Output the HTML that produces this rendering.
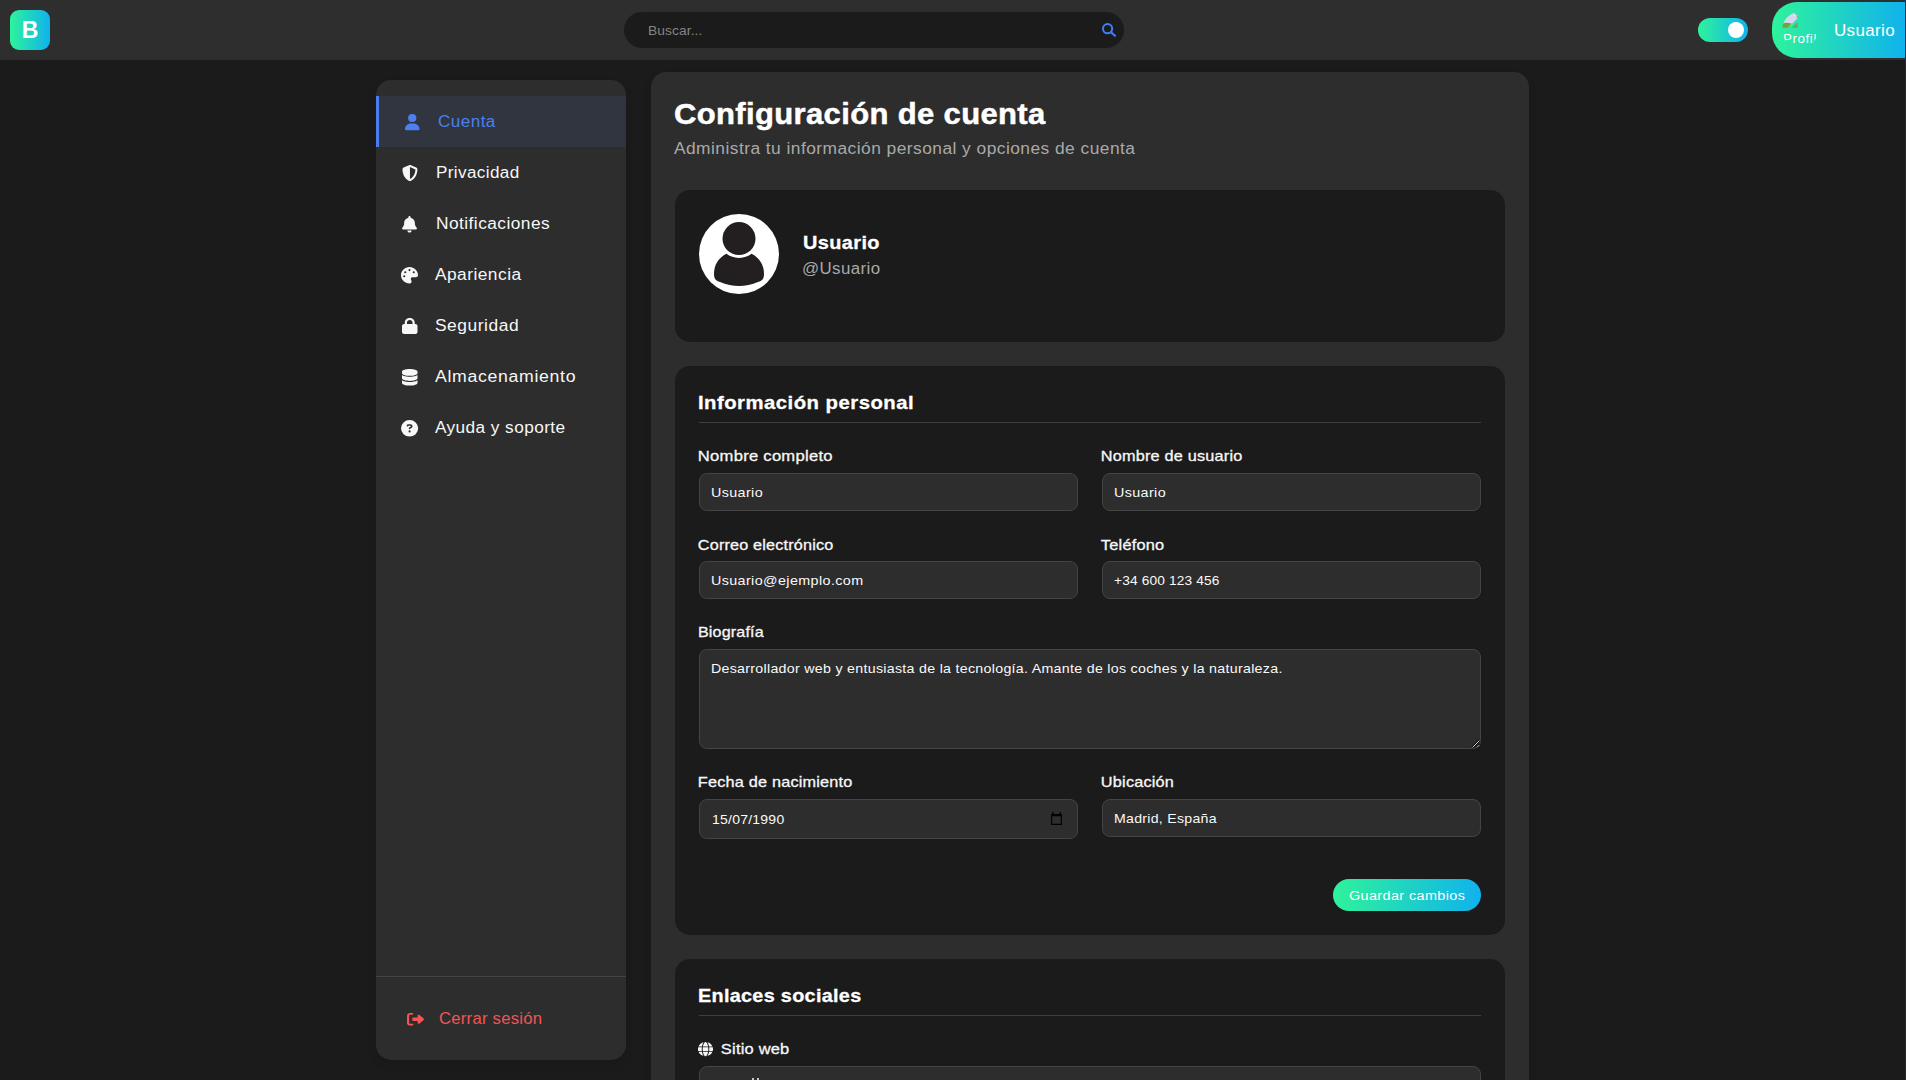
<!DOCTYPE html>
<html lang="es">
<head>
<meta charset="utf-8">
<title>Configuración de cuenta</title>
<style>
*{box-sizing:border-box;margin:0;padding:0}
html,body{width:1906px;height:1080px;overflow:hidden;background:#1b1b1b;font-family:"Liberation Sans",sans-serif;color:#fff}
.abs{position:absolute}
.t{position:absolute;white-space:nowrap;line-height:40px;height:40px}
.ic{position:absolute;overflow:visible}
.grad{background:linear-gradient(90deg,#2ef39b 0%,#10b2ec 100%)}
#hdr{position:absolute;left:0;top:0;width:1906px;height:60px;background:#2e2e2e}
#logo{left:10px;top:10px;width:40px;height:40px;border-radius:9px;color:#fff;font-weight:bold;font-size:23px;text-align:center;line-height:41px}
#search{left:624px;top:12px;width:500px;height:36px;border-radius:18px;background:#1b1b1b}
#toggle{left:1698px;top:18px;width:50px;height:24px;border-radius:12px;background:linear-gradient(90deg,#2ef39b,#10b2ec)}
#knob{left:1728px;top:22px;width:16px;height:16px;border-radius:50%;background:#fff}
#prof{left:1772px;top:2px;width:133px;height:56px;border-radius:25px 0 0 25px}
#side{left:376px;top:80px;width:250px;height:980px;border-radius:15px;box-shadow:0 4px 8px rgba(0,0,0,.12);background:#2d2d2d;overflow:hidden}
#act{left:376px;top:96px;width:250px;height:51px;background:#30353f;border-left:3px solid #4a7dec}
#sdiv{left:376px;top:976px;width:250px;height:1px;background:#444}
#main{left:651px;top:72px;width:878px;height:1100px;border-radius:15px;box-shadow:0 4px 8px rgba(0,0,0,.12);background:#2d2d2d}
.card{position:absolute;left:675px;width:830px;border-radius:15px;background:#1b1b1b}
.hr{position:absolute;left:699px;width:782px;height:1px;background:#3f3f3f}
.inp{position:absolute;height:38px;border:1px solid #444;border-radius:8px;background:#2d2d2d}
#btn{left:1333px;top:879px;width:148px;height:32px;border-radius:16px}

</style>
</head>
<body>
<div id="hdr"></div>
<div id="logo" class="abs grad">B</div>
<div id="search" class="abs"></div>
<svg class="ic" style="left:1100px;top:21px;width:18px;height:18px" viewBox="0 0 18 18"><circle cx="7.6" cy="7.7" r="4.6" fill="none" stroke="#3f7ff5" stroke-width="2"/><path d="M11 11.2 L15 14.8" stroke="#3f7ff5" stroke-width="2.2" stroke-linecap="round"/></svg>
<div id="toggle" class="abs"></div>
<div id="knob" class="abs"></div>
<div id="prof" class="abs grad"></div>
<div class="abs" style="left:1782px;top:12px;width:36px;height:36px;border-radius:50%;overflow:hidden">
<svg style="position:absolute;left:0;top:1px;width:16px;height:16px" viewBox="0 0 16 16">
<path fill="#d4d8ee" d="M0 14.8 L6 14.8 L15.6 5.2 L15.6 3 L12.6 0 L0 0 Z"/>
<path fill="#f4f5fb" d="M12.6 0 L12.6 3 L15.6 3 Z"/>
<path fill="#6aa93a" d="M0 10.8 C3 9.2 6 9.6 9.6 10.6 L6 14.8 L0 14.8 Z"/>
<path fill="#6aa93a" d="M10 14.8 L15.6 9.2 L15.6 14.8 Z"/>
<path fill="none" stroke="#9a8f96" stroke-width="0.9" d="M0 14.4 L6.4 14.4 M10 14.4 L15.2 14.4 L15.2 9.5 M15.2 5 L15.2 3 L12.6 0.4"/>
</svg>
<div style="position:absolute;left:1px;top:19px;font-size:13.33px;line-height:16px;color:#fff;letter-spacing:0.6px;white-space:nowrap">Profile</div>
</div>

<div id="side" class="abs"></div>
<div id="act" class="abs"></div>
<div id="sdiv" class="abs"></div>

<div id="main" class="abs"></div>
<div class="card" style="top:190px;height:152px"></div>
<div class="card" style="top:366px;height:569px"></div>
<div class="card" style="top:959px;height:300px"></div>
<div class="hr" style="top:422px"></div>
<div class="hr" style="top:1015px"></div>

<svg class="ic" style="left:699px;top:214px;width:80px;height:80px" viewBox="0 0 80 80">
<circle cx="40" cy="40" r="40" fill="#fff"/>
<path fill="#231f20" d="M15,60 C15,46 26,37 40,37 C54,37 65,46 65,60 C65,65 63,67 59,68 Q40,76 21,68 C17,67 15,65 15,60 Z"/>
<circle cx="40" cy="24.6" r="19.5" fill="#fff"/>
<circle cx="40" cy="24.6" r="16.5" fill="#231f20"/>
</svg>

<div class="inp" style="left:699px;top:473px;width:379px"></div>
<div class="inp" style="left:1102px;top:473px;width:379px"></div>
<div class="inp" style="left:699px;top:561px;width:379px"></div>
<div class="inp" style="left:1102px;top:561px;width:379px"></div>
<div class="inp" style="left:699px;top:649px;width:782px;height:100px"></div>
<div class="inp" style="left:699px;top:799px;width:379px;height:40px"></div>
<div class="inp" style="left:1102px;top:799px;width:379px;height:38px"></div>
<div class="inp" style="left:699px;top:1066px;width:782px;height:38px"></div>
<div id="btn" class="abs grad"></div>
<svg class="ic" style="left:1050px;top:811px;width:13px;height:15px" viewBox="0 0 13 15">
<path fill="#000" d="M2 1.2 h1.6 v1.8 h5.8 v-1.8 h1.6 v1.8 h0.9 v11 h-10.8 v-11 h0.9 z M2.2 5.2 v7.6 h8.6 v-7.6 z"/>
</svg>
<svg class="ic" style="left:1470px;top:738px;width:11px;height:11px" viewBox="0 0 11 11">
<path d="M2.8 9.2 L9.2 2.8 M7.2 9.2 L9.2 7.2" stroke="#111" stroke-width="2.4" stroke-linecap="round"/>
<path d="M2.8 9.2 L9.2 2.8 M7.2 9.2 L9.2 7.2" stroke="#d8d8d8" stroke-width="1" stroke-linecap="round"/>
</svg>
<div class="abs" style="left:752px;top:1078px;width:2px;height:2px;background:#c8c8c8"></div>
<div class="abs" style="left:757px;top:1078px;width:2px;height:2px;background:#c8c8c8"></div>
<div class="abs" style="left:1905px;top:60px;width:1px;height:1020px;background:#282828"></div>

<svg class="ic" style="left:405.3px;top:113.8px;width:14.5px;height:16.200000000000003px" viewBox="0 0 448 512" preserveAspectRatio="none"><path fill="#4b80ee" d="M224 256A128 128 0 1 0 224 0a128 128 0 1 0 0 256zm-45.7 48C79.8 304 0 383.8 0 482.3C0 498.7 13.3 512 29.7 512H418.3c16.4 0 29.7-13.3 29.7-29.7C448 383.8 368.2 304 269.7 304H178.3z"/></svg>
<svg class="ic" style="left:401.5px;top:164.9px;width:15.899999999999977px;height:16.19999999999999px" viewBox="0 0 512 512" preserveAspectRatio="none"><path fill="#f7f7f7" d="M256 0c4.6 0 9.2 1 13.4 2.9L457.7 82.8c22 9.3 38.4 31 38.3 57.2c-.5 99.2-41.3 280.7-213.6 363.2c-16.7 8-36.1 8-52.8 0C57.3 420.7 16.5 239.2 16 140c-.1-26.2 16.3-47.9 38.3-57.2L242.7 2.9C246.8 1 251.4 0 256 0zm0 66.8V444.8C394 378 431.1 230.1 432 141.4L256 66.8l0 0z"/></svg>
<svg class="ic" style="left:402px;top:215.6px;width:15px;height:16.599999999999994px" viewBox="0 0 448 512" preserveAspectRatio="none"><path fill="#f7f7f7" d="M224 0c-17.7 0-32 14.3-32 32V51.2C119 66 64 130.6 64 208v18.8c0 47-17.3 92.4-48.5 127.6l-7.4 8.3c-8.4 9.4-10.4 22.9-5.3 34.4S19.4 416 32 416H416c12.6 0 24-7.4 29.2-18.9s3.1-25-5.3-34.4l-7.4-8.300C401.3 319.2 384 273.9 384 226.8V208c0-77.4-55-142-128-156.8V32c0-17.7-14.3-32-32-32zm45.3 493.3c12-12 18.7-28.3 18.700-45.3H224 160c0 17 6.7 33.3 18.7 45.3s28.3 18.7 45.3 18.7s33.3-6.7 45.3-18.7z"/></svg>
<svg class="ic" style="left:401px;top:266.8px;width:17px;height:16.5px" viewBox="0 0 512 512" preserveAspectRatio="none"><path fill="#f7f7f7" d="M512 256c0 .9 0 1.8 0 2.7c-.4 36.5-33.6 61.3-70.1 61.3H344c-26.5 0-48 21.5-48 48c0 3.4 .4 6.7 1 9.9c2.1 10.2 6.5 20 10.8 29.9c6.1 13.8 12.1 27.5 12.1 42c0 31.8-21.6 60.7-53.4 62c-3.500 .1-7 .2-10.6 .2C114.6 512 0 397.4 0 256S114.6 0 256 0S512 114.6 512 256zM128 288a32 32 0 1 0 -64 0 32 32 0 1 0 64 0zm0-96a32 32 0 1 0 0-64 32 32 0 1 0 0 64zM288 96a32 32 0 1 0 -64 0 32 32 0 1 0 64 0zm96 96a32 32 0 1 0 0-64 32 32 0 1 0 0 64z"/></svg>
<svg class="ic" style="left:401.7px;top:318px;width:15.5px;height:16px" viewBox="0 0 448 512" preserveAspectRatio="none"><path fill="#f7f7f7" d="M144 144v48H304V144c0-44.2-35.8-80-80-80s-80 35.8-80 80zM80 192V144C80 64.5 144.5 0 224 0s144 64.5 144 144v48h16c35.3 0 64 28.7 64 64V448c0 35.3-28.7 64-64 64H64c-35.3 0-64-28.7-64-64V256c0-35.3 28.7-64 64-64H80z"/></svg>
<svg class="ic" style="left:401.7px;top:368.7px;width:15.5px;height:16.600000000000023px" viewBox="0 0 448 512" preserveAspectRatio="none"><path fill="#f7f7f7" d="M448 80v48c0 44.2-100.3 80-224 80S0 172.2 0 128V80C0 35.8 100.3 0 224 0S448 35.8 448 80zM393.2 214.7c20.8-7.4 39.9-16.9 54.8-28.6V288c0 44.2-100.3 80-224 80S0 332.2 0 288V186.1c14.9 11.8 34 21.2 54.8 28.6C99.7 230.7 159.5 240 224 240s124.3-9.3 169.2-25.3zM0 346.1c14.9 11.8 34 21.2 54.8 28.6C99.7 390.7 159.5 400 224 400s124.3-9.3 169.2-25.3c20.8-7.4 39.9-16.9 54.8-28.6V432c0 44.2-100.3 80-224 80S0 476.2 0 432V346.1z"/></svg>
<svg class="ic" style="left:400.8px;top:419.7px;width:17.19999999999999px;height:16.600000000000023px" viewBox="0 0 512 512" preserveAspectRatio="none"><path fill="#f7f7f7" d="M256 512A256 256 0 1 0 256 0a256 256 0 1 0 0 512zM169.8 165.3c7.9-22.3 29.1-37.3 52.8-37.3h58.3c34.9 0 63.1 28.3 63.1 63.1c0 22.6-12.1 43.5-31.7 54.8L280 264.4c-.2 13-10.9 23.6-24 23.6c-13.3 0-24-10.7-24-24V250.5c0-8.6 4.6-16.5 12.1-20.8l44.3-25.4c4.7-2.7 7.6-7.700 7.6-13.1c0-8.4-6.8-15.1-15.1-15.1H222.6c-3.4 0-6.4 2.1-7.5 5.3l-.4 1.2c-4.4 12.5-18.2 19-30.6 14.6s-19-18.2-14.6-30.6l.4-1.2zM224 352a32 32 0 1 1 64 0 32 32 0 1 1 -64 0z"/></svg>
<svg class="ic" style="left:407px;top:1011.5px;width:17px;height:14.5px" viewBox="0 0 512 512" preserveAspectRatio="none"><path fill="#f15555" d="M377.9 105.9L500.7 228.7c7.2 7.2 11.3 17.1 11.3 27.3s-4.1 20.1-11.3 27.3L377.9 406.1c-6.4 6.4-15 9.9-24 9.9c-18.7 0-33.9-15.2-33.9-33.9l0-62.1-128 0c-17.7 0-32-14.3-32-32l0-64c0-17.7 14.3-32 32-32l128 0 0-62.1c0-18.7 15.2-33.9 33.9-33.9c9 0 17.6 3.6 24 9.9zM160 96L96 96c-17.7 0-32 14.3-32 32l0 256c0 17.7 14.3 32 32 32l64 0c17.7 0 32 14.3 32 32s-14.3 32-32 32l-64 0c-53 0-96-43-96-96L0 128C0 75 43 32 96 32l64 0c17.7 0 32 14.3 32 32s-14.3 32-32 32z"/></svg>
<svg class="ic" style="left:698px;top:1041.7px;width:15px;height:14.299999999999955px" viewBox="0 0 512 512" preserveAspectRatio="none"><path fill="#f7f7f7" d="M352 256c0 22.2-1.2 43.6-3.3 64H163.3c-2.2-20.4-3.3-41.8-3.3-64s1.2-43.6 3.3-64H348.7c2.2 20.4 3.3 41.8 3.3 64zm28.8-64H503.9c5.3 20.5 8.1 41.9 8.1 64s-2.8 43.5-8.1 64H380.8c2.1-20.6 3.2-42 3.2-64s-1.1-43.4-3.2-64zm112.6-32H376.7c-10-63.9-29.8-117.4-55.3-151.6c78.3 20.7 142 77.5 171.900 151.6zm-149.1 0H167.7c6.1-36.4 15.5-68.6 27-94.7c10.5-23.6 22.2-40.7 33.5-51.5C239.4 3.2 248.7 0 256 0s16.6 3.2 27.8 13.8c11.3 10.8 23 27.9 33.5 51.5c11.6 26 20.9 58.2 27 94.7zm-209 0H18.6C48.6 85.9 112.2 29.1 190.6 8.4C165.1 42.6 145.3 96.1 135.3 160zM8.1 192H131.2c-2.1 20.6-3.2 42-3.2 64s1.1 43.4 3.2 64H8.1C2.800 299.5 0 278.1 0 256s2.8-43.5 8.1-64zM194.7 446.6c-11.6-26-20.9-58.2-27-94.6H344.3c-6.1 36.4-15.5 68.6-27 94.6c-10.5 23.6-22.2 40.7-33.5 51.5C272.6 508.8 263.3 512 256 512s-16.6-3.2-27.8-13.8c-11.3-10.8-23-27.9-33.5-51.5zM135.3 352c10 63.9 29.8 117.4 55.3 151.6C112.2 482.9 48.6 426.1 18.6 352H135.3zm358.1 0c-30 74.1-93.6 130.9-171.9 151.6c25.5-34.2 45.200-87.7 55.300-151.6H493.4z"/></svg>
<div class="t" style="left:647.7px;top:11px;font-size:13.33px;font-weight:400;color:#858585;letter-spacing:0.12px;transform:scaleX(1.0292);transform-origin:1.0px 0;">Buscar...</div>
<div class="t" style="left:1834.3px;top:10.9px;font-size:16px;font-weight:400;color:#fff;letter-spacing:0.36px;transform:scaleX(1.0599);transform-origin:1.0px 0;">Usuario</div>
<div class="t" style="left:438.1px;top:102.0px;font-size:16px;font-weight:400;color:#4b80ee;letter-spacing:0.45px;transform:scaleX(1.0664);transform-origin:1.0px 0;">Cuenta</div>
<div class="t" style="left:435.5px;top:153.0px;font-size:16px;font-weight:400;color:#f7f7f7;letter-spacing:0.37px;transform:scaleX(1.0674);transform-origin:1.0px 0;">Privacidad</div>
<div class="t" style="left:435.5px;top:204.0px;font-size:16px;font-weight:400;color:#f7f7f7;letter-spacing:0.42px;transform:scaleX(1.0831);transform-origin:1.0px 0;">Notificaciones</div>
<div class="t" style="left:434.5px;top:255.0px;font-size:16px;font-weight:400;color:#f7f7f7;letter-spacing:0.45px;transform:scaleX(1.0818);transform-origin:1.0px 0;">Apariencia</div>
<div class="t" style="left:434.5px;top:306.0px;font-size:16px;font-weight:400;color:#f7f7f7;letter-spacing:0.52px;transform:scaleX(1.0860);transform-origin:1.0px 0;">Seguridad</div>
<div class="t" style="left:434.5px;top:357.0px;font-size:16px;font-weight:400;color:#f7f7f7;letter-spacing:0.63px;transform:scaleX(1.1043);transform-origin:1.0px 0;">Almacenamiento</div>
<div class="t" style="left:434.5px;top:408.0px;font-size:16px;font-weight:400;color:#f7f7f7;letter-spacing:0.41px;transform:scaleX(1.0757);transform-origin:1.0px 0;">Ayuda y soporte</div>
<div class="t" style="left:439.0px;top:999px;font-size:16px;font-weight:400;color:#f15555;letter-spacing:0.23px;transform:scaleX(1.0440);transform-origin:1.0px 0;">Cerrar sesión</div>
<div class="t" style="left:674.2px;top:94.1px;font-size:30px;font-weight:700;color:#fff;letter-spacing:0.35px;transform:scaleX(1.0331);transform-origin:1.0px 0;-webkit-text-stroke:0.5px #fff;">Configuración de cuenta</div>
<div class="t" style="left:674.0px;top:128.5px;font-size:16px;font-weight:400;color:#a9a9a9;letter-spacing:0.42px;transform:scaleX(1.0856);transform-origin:1.0px 0;">Administra tu información personal y opciones de cuenta</div>
<div class="t" style="left:802.5px;top:223.1px;font-size:19px;font-weight:700;color:#fff;letter-spacing:0.38px;transform:scaleX(1.0490);transform-origin:1.0px 0;-webkit-text-stroke:0.3px #fff;">Usuario</div>
<div class="t" style="left:802.0px;top:248.9px;font-size:16px;font-weight:400;color:#a9a9a9;letter-spacing:0.38px;transform:scaleX(1.0561);transform-origin:1.0px 0;">@Usuario</div>
<div class="t" style="left:698.4px;top:382.9px;font-size:19px;font-weight:700;color:#fff;letter-spacing:0.46px;transform:scaleX(1.0682);transform-origin:1.0px 0;-webkit-text-stroke:0.3px #fff;">Información personal</div>
<div class="t" style="left:697.9px;top:976.4px;font-size:19px;font-weight:700;color:#fff;letter-spacing:0.29px;transform:scaleX(1.0435);transform-origin:1.0px 0;-webkit-text-stroke:0.3px #fff;">Enlaces sociales</div>
<div class="t" style="left:698.0px;top:436.2px;font-size:14.4px;font-weight:400;color:#f7f7f7;letter-spacing:0.22px;transform:scaleX(1.1543);transform-origin:1.0px 0;-webkit-text-stroke:0.3px #f7f7f7;">Nombre completo</div>
<div class="t" style="left:1101.2px;top:436.2px;font-size:14.4px;font-weight:400;color:#f7f7f7;letter-spacing:0.17px;transform:scaleX(1.1300);transform-origin:1.0px 0;-webkit-text-stroke:0.3px #f7f7f7;">Nombre de usuario</div>
<div class="t" style="left:697.9px;top:524.5px;font-size:14.4px;font-weight:400;color:#f7f7f7;letter-spacing:0.15px;transform:scaleX(1.1264);transform-origin:1.0px 0;-webkit-text-stroke:0.3px #f7f7f7;">Correo electrónico</div>
<div class="t" style="left:1100.7px;top:524.5px;font-size:14.4px;font-weight:400;color:#f7f7f7;letter-spacing:0.18px;transform:scaleX(1.1371);transform-origin:1.0px 0;-webkit-text-stroke:0.3px #f7f7f7;">Teléfono</div>
<div class="t" style="left:697.9px;top:612.3px;font-size:14.4px;font-weight:400;color:#f7f7f7;letter-spacing:0.15px;transform:scaleX(1.1177);transform-origin:1.0px 0;-webkit-text-stroke:0.3px #f7f7f7;">Biografía</div>
<div class="t" style="left:698.0px;top:762px;font-size:14.4px;font-weight:400;color:#f7f7f7;letter-spacing:0.17px;transform:scaleX(1.1304);transform-origin:1.0px 0;-webkit-text-stroke:0.3px #f7f7f7;">Fecha de nacimiento</div>
<div class="t" style="left:1101.0px;top:762px;font-size:14.4px;font-weight:400;color:#f7f7f7;letter-spacing:0.18px;transform:scaleX(1.1301);transform-origin:1.0px 0;-webkit-text-stroke:0.3px #f7f7f7;">Ubicación</div>
<div class="t" style="left:721.4px;top:1029px;font-size:14.4px;font-weight:400;color:#f7f7f7;letter-spacing:0.18px;transform:scaleX(1.1422);transform-origin:1.0px 0;-webkit-text-stroke:0.3px #f7f7f7;">Sitio web</div>
<div class="t" style="left:711.0px;top:472.8px;font-size:13.33px;font-weight:400;color:#fafafa;letter-spacing:0.37px;transform:scaleX(1.0738);transform-origin:1.0px 0;">Usuario</div>
<div class="t" style="left:1113.9px;top:472.8px;font-size:13.33px;font-weight:400;color:#fafafa;letter-spacing:0.37px;transform:scaleX(1.0738);transform-origin:1.0px 0;">Usuario</div>
<div class="t" style="left:711.1px;top:560.8px;font-size:13.33px;font-weight:400;color:#fafafa;letter-spacing:0.37px;transform:scaleX(1.0741);transform-origin:1.0px 0;">Usuario@ejemplo.com</div>
<div class="t" style="left:1113.9px;top:560.8px;font-size:13.33px;font-weight:400;color:#fafafa;letter-spacing:0.14px;transform:scaleX(1.0296);transform-origin:1.0px 0;">+34 600 123 456</div>
<div class="t" style="left:711.4px;top:649px;font-size:13.33px;font-weight:400;color:#fafafa;letter-spacing:0.27px;transform:scaleX(1.0668);transform-origin:1.0px 0;">Desarrollador web y entusiasta de la tecnología. Amante de los coches y la naturaleza.</div>
<div class="t" style="left:711.8px;top:800.1px;font-size:13.33px;font-weight:400;color:#fafafa;letter-spacing:0.24px;transform:scaleX(1.0485);transform-origin:1.0px 0;">15/07/1990</div>
<div class="t" style="left:1114.2px;top:799px;font-size:13.33px;font-weight:400;color:#fafafa;letter-spacing:0.28px;transform:scaleX(1.0582);transform-origin:1.0px 0;">Madrid, España</div>
<div class="t" style="left:1348.9px;top:875.9px;font-size:13.33px;font-weight:400;color:#fff;letter-spacing:0.38px;transform:scaleX(1.0789);transform-origin:1.0px 0;">Guardar cambios</div>
</body>
</html>
